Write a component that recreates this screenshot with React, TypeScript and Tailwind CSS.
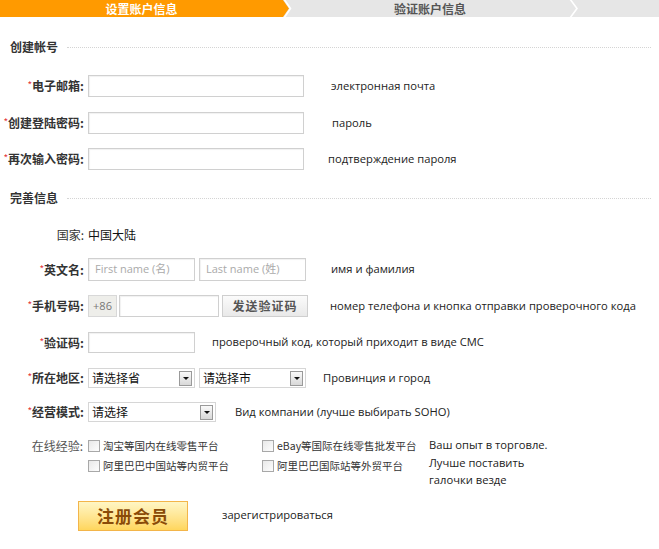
const cjk = "font-['Noto_Sans_CJK_SC',sans-serif]";
const ru = "font-['Open_Sans','Noto_Sans_CJK_SC',sans-serif]";

function Label({ text, star = true, bold = true }: { text: string; star?: boolean; bold?: boolean }) {
  return (
    <div className={`w-[84px] shrink-0 flex justify-end whitespace-nowrap text-[12px] text-[#333] ${bold ? "font-bold" : ""}`}>
      {star && <span className="text-[#e4393c] text-[10px] font-normal">*</span>}
      <span>{text}:</span>
    </div>
  );
}

function Input({ w, placeholder }: { w: string; placeholder?: string }) {
  return (
    <div className={`${w} h-full border border-[#d0d0d0] bg-white shadow-[inset_1px_1px_1px_rgba(0,0,0,0.06)] flex items-center px-[6px] text-[11px] text-[#aaa] ${ru}`}>
      {placeholder}
    </div>
  );
}

function Select({ w, text }: { w: string; text: string }) {
  return (
    <div className={`${w} h-full border border-[#d6d6d6] bg-white flex items-center justify-between pl-[3px] pr-[2px]`}>
      <span className="text-[12px] text-[#111]">{text}</span>
      <span className="w-[13px] h-[15px] border border-[#9a9a9a] bg-gradient-to-b from-[#fafafa] to-[#d8d8d8] flex items-center justify-center">
        <span className="border-x-[3px] border-t-[3px] border-x-transparent border-t-[#111]" />
      </span>
    </div>
  );
}

function Hint({ ml, children }: { ml: string; children: React.ReactNode }) {
  return <div className={`${ml} text-[11.2px] text-[#222] whitespace-nowrap ${ru}`}>{children}</div>;
}

function Check({ text }: { text: string }) {
  return (
    <div className="flex items-center h-[18px]">
      <span className="w-[12px] h-[12px] border border-[#a8a8a8] bg-gradient-to-br from-[#e8e8e8] to-[#fdfdfd]" />
      <span className="ml-[3px] text-[10.5px] text-[#333] whitespace-nowrap">{text}</span>
    </div>
  );
}

function Section({ title, mt }: { title: string; mt: string }) {
  return (
    <div className={`${mt} flex items-center h-[16px] pl-[10px] pr-[8px]`}>
      <span className="text-[12px] font-bold text-[#333]">{title}</span>
      <span className="ml-[9px] flex-1 border-t border-dotted border-[#d4d4d4]" />
    </div>
  );
}

export default function App() {
  return (
    <div className={`w-[659px] h-[549px] bg-white ${cjk} overflow-hidden`}>
      <div className="relative flex h-[17px] bg-[#e6e6e6]">
        <div className="w-[283px] bg-[#ff9a00] text-white text-[12px] font-bold leading-[17px] text-center">设置账户信息</div>
        <svg className="absolute left-[282px] top-0" width="12" height="17" viewBox="0 0 12 17">
          <polygon points="0,0 1,0 7,8.5 1,17 0,17" fill="#ff9a00" />
          <polyline points="2,-1 8.5,8.5 2,18" fill="none" stroke="#ffffff" strokeWidth="1.6" />
        </svg>
        <div className="ml-[7px] w-[280px] text-[#555] text-[12px] font-bold leading-[17px] text-center">验证账户信息</div>
        <svg className="absolute left-[569px] top-0" width="14" height="17" viewBox="0 0 14 17">
          <polyline points="1,-1 8,8.5 1,18" fill="none" stroke="#ffffff" strokeWidth="1.6" />
        </svg>
      </div>

      <Section title="创建帐号" mt="mt-[22px]" />

      <div className="mt-[20px] h-[22px] flex items-center gap-[4px]">
        <Label text="电子邮箱" />
        <Input w="w-[216px]" />
        <Hint ml="ml-[23px]">электронная почта</Hint>
      </div>
      <div className="mt-[15px] h-[22px] flex items-center gap-[4px]">
        <Label text="创建登陆密码" />
        <Input w="w-[216px]" />
        <Hint ml="ml-[24px]">пароль</Hint>
      </div>
      <div className="mt-[14px] h-[22px] flex items-center gap-[4px]">
        <Label text="再次输入密码" />
        <Input w="w-[216px]" />
        <Hint ml="ml-[20px]">подтверждение пароля</Hint>
      </div>

      <Section title="完善信息" mt="mt-[20px]" />

      <div className="mt-[18px] h-[22px] flex items-center gap-[4px]">
        <Label text="国家" star={false} bold={false} />
        <span className="text-[12px] text-[#111]">中国大陆</span>
      </div>
      <div className="mt-[12px] h-[23px] flex items-center gap-[4px]">
        <Label text="英文名" />
        <Input w="w-[107px]" placeholder="First name (名)" />
        <Input w="w-[107px]" placeholder="Last name (姓)" />
        <Hint ml="ml-[21px]">имя и фамилия</Hint>
      </div>
      <div className="mt-[14px] h-[22px] flex items-center gap-[2px]">
        <div className="w-[86px]" >
          <Label text="手机号码" />
        </div>
        <div className={`w-[29px] h-full border border-[#d8d8d8] bg-[#eeeeea] flex items-center justify-center text-[11px] text-[#777] ${ru}`}>+86</div>
        <Input w="w-[100px]" />
        <div className="ml-[1px] w-[86px] h-full border border-[#cfcfcf] bg-gradient-to-b from-[#fbfbfb] to-[#e9e9e9] flex items-center justify-center text-[12px] font-bold text-[#555] tracking-[1px]">发送验证码</div>
        <Hint ml="ml-[20px]">номер телефона и кнопка отправки проверочного кода</Hint>
      </div>
      <div className="mt-[15px] h-[21px] flex items-center gap-[4px]">
        <Label text="验证码" />
        <Input w="w-[107px]" />
        <Hint ml="ml-[13px]">проверочный код, который приходит в виде СМС</Hint>
      </div>
      <div className="mt-[15px] h-[20px] flex items-center gap-[4px]">
        <Label text="所在地区" />
        <Select w="w-[107px]" text="请选择省" />
        <Select w="w-[107px]" text="请选择市" />
        <Hint ml="ml-[13px]">Провинция и город</Hint>
      </div>
      <div className="mt-[14px] h-[20px] flex items-center gap-[4px]">
        <Label text="经营模式" />
        <Select w="w-[128px]" text="请选择" />
        <Hint ml="ml-[15px]">Вид компании (лучше выбирать SOHO)</Hint>
      </div>

      <div className="mt-[15px] flex items-start gap-[2px]">
        <div className="h-[18px] flex items-center">
          <div className="w-[86px] pr-[3px] text-right text-[12px] text-[#555] whitespace-nowrap">在线经验:</div>
        </div>
        <div className="grid grid-cols-[174px_165px] gap-y-[2px]">
          <Check text="淘宝等国内在线零售平台" />
          <Check text="eBay等国际在线零售批发平台" />
          <Check text="阿里巴巴中国站等内贸平台" />
          <Check text="阿里巴巴国际站等外贸平台" />
        </div>
        <div className={`-mt-[1px] text-[11.2px] leading-[17.5px] text-[#222] ${ru}`}>
          <div>Ваш опыт в торговле.</div>
          <div>Лучше поставить</div>
          <div>галочки везде</div>
        </div>
      </div>

      <div className="mt-[12px] flex items-center">
        <div className="ml-[78px] w-[110px] h-[30px] border border-[#f3b54a] bg-gradient-to-b from-[#fff6c4] to-[#ffd65c] flex items-center justify-center text-[17px] font-bold text-[#8a4b08] tracking-[1px]">注册会员</div>
        <Hint ml="ml-[34px]">зарегистрироваться</Hint>
      </div>
    </div>
  );
}
